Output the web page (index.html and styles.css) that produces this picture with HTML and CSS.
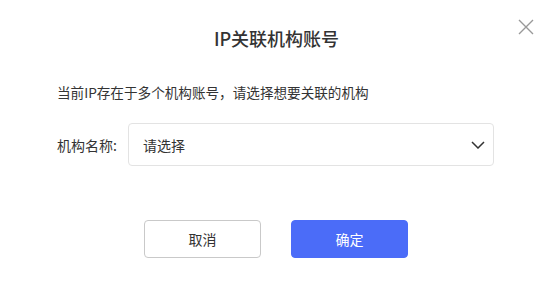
FILE: index.html
```html
<!DOCTYPE html>
<html lang="zh-CN">
<head>
<meta charset="utf-8">
<title>IP关联机构账号</title>
<link rel="stylesheet" href="styles.css">
</head>
<body>
<div class="dialog">
  <button class="close" aria-label="关闭">
    <svg width="16" height="16" viewBox="0 0 16 16"><path d="M1 1 L15 15 M15 1 L1 15" stroke="#999" stroke-width="1.4" fill="none"/></svg>
  </button>
  <div class="title">IP关联机构账号</div>
  <p class="desc">当前IP存在于多个机构账号，请选择想要关联的机构</p>
  <div class="form-row">
    <label class="label">机构名称:</label>
    <div class="select">
      <span class="placeholder">请选择</span>
      <svg class="chevron" width="14" height="8" viewBox="0 0 14 8"><polyline points="1,1 7,7 13,1" stroke="#333" stroke-width="1.5" fill="none"/></svg>
    </div>
  </div>
  <div class="actions">
    <button class="btn btn-cancel">取消</button>
    <button class="btn btn-ok">确定</button>
  </div>
</div>
</body>
</html>
```
FILE: styles.css
```css
* { box-sizing: border-box; }
html, body { margin: 0; padding: 0; background: #fff; }
body {
  font-family: "Noto Sans CJK SC", "Noto Sans", sans-serif;
  color: #333;
  width: 554px;
  height: 294px;
  overflow: hidden;
}
.dialog {
  position: relative;
  padding: 26px 60px 0 57px;
}
.close {
  position: absolute;
  top: 19px;
  left: 518px;
  width: 16px;
  height: 16px;
  padding: 0;
  border: 0;
  background: none;
  display: block;
}
.close svg { display: block; }
.title {
  text-align: center;
  font-size: 18px;
  line-height: 24px;
  font-weight: 500;
  color: #333;
  margin-left: 2px;
}
.desc {
  margin: 32px 0 0;
  font-size: 13.6px;
  line-height: 20px;
  color: #333;
}
.form-row {
  display: flex;
  align-items: center;
  margin-top: 21px;
}
.label {
  width: 71px;
  flex: none;
  font-size: 14px;
  line-height: 20px;
  color: #333;
}
.select {
  flex: 1;
  height: 43px;
  border: 1px solid #e3e3e3;
  border-radius: 4px;
  display: flex;
  align-items: center;
  justify-content: space-between;
  padding: 0 8px 0 14px;
}
.placeholder {
  font-size: 14px;
  line-height: 20px;
  color: #333;
}
.chevron { display: block; }
.actions {
  display: flex;
  justify-content: center;
  gap: 30px;
  margin-top: 54px;
  margin-left: 1px;
}
.btn {
  width: 117px;
  height: 38px;
  border-radius: 4px;
  font-family: inherit;
  font-size: 14px;
  padding: 0;
}
.btn-cancel {
  background: #fff;
  border: 1px solid #c9c9c9;
  color: #333;
}
.btn-ok {
  background: #4b6cf8;
  border: 1px solid #4b6cf8;
  color: #fff;
}
```
